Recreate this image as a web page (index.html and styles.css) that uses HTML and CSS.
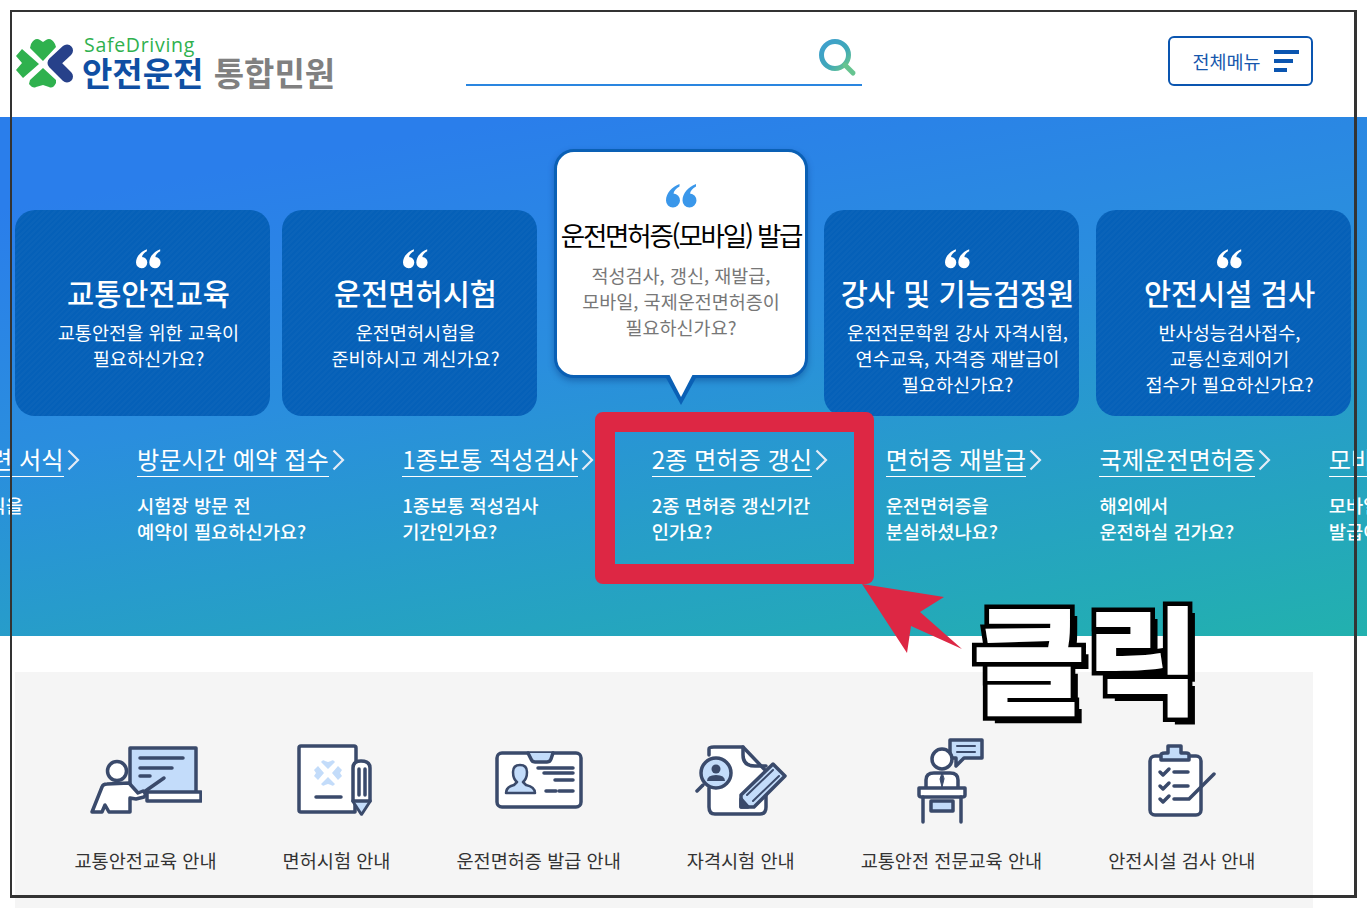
FILE: index.html
```html
<!DOCTYPE html>
<html lang="ko">

<head>
    <meta charset="UTF-8">
    <title>안전운전 통합민원</title>
    <link rel="stylesheet" href="styles.css">
</head>

<body>
    <svg class="defs" width="0" height="0">
        <defs>
            <linearGradient id="searchGrad" x1="0" y1="0" x2="1" y2="1">
                <stop offset="0" stop-color="#3f9fd0" />
                <stop offset="0.6" stop-color="#3fa8b8" />
                <stop offset="1" stop-color="#6cc88a" />
            </linearGradient>
            <symbol id="quote" viewBox="0 0 31 25">
                <path d="M13.5 1 C6 4 0 10 0 17.5 A7 7 0 1 0 7.5 10.5 C8 7.5 10 5.5 13.5 3.5 Z" />
                <path d="M30 1 C22.500 4 16.500 10 16.500 17.500 A7 7 0 1 0 24 10.500 C24.500 7.500 26.500 5.500 30 3.500 Z" />
            </symbol>
            <symbol id="chev" viewBox="0 0 13 22">
                <polyline points="1.500,1.500 11,11 1.500,20.500" fill="none" stroke="#e3ebf6" stroke-width="2.200" />
            </symbol>
        </defs>
    </svg>

    <header class="top">
        <a class="logo">
            <svg class="logo-mark" width="60" height="52" viewBox="0 0 60 52">
                <path d="M16 7 Q20 0 25 3 L28 5 L31 3 Q36 0 40 7 L41 10 L28 24 L15 11 Z" fill="#2fb14e" />
                <path d="M14 47 Q18 52 21 50 L28 48 L34 50 Q38 52 41 46 L41 43 L28 31 L15 43 Z" fill="#2fb14e" />
                <path d="M7 12 L24 27 L8 41 L1 33 L7 26 L1 19 Z" fill="#2fb14e" />
                <polyline points="52,13.500 38.500,26 52,39.500" fill="none" stroke="#27418a" stroke-width="12" stroke-linejoin="round" stroke-linecap="round" />
            </svg>
            <span class="logo-text">
                <span class="logo-en">SafeDriving</span>
                <span class="logo-ko"><b>안전운전</b> <i>통합민원</i></span>
            </span>
        </a>
        <div class="search">
            <svg width="40" height="40" viewBox="0 0 40 40">
                <circle cx="17" cy="17" r="13.500" fill="none" stroke="url(#searchGrad)" stroke-width="5" />
                <line x1="27" y1="27" x2="35" y2="35" stroke="#66c490" stroke-width="5" stroke-linecap="round" />
            </svg>
        </div>
        <button class="menu-btn">
            <span>전체메뉴</span>
            <span class="menu-bars"><i class="bar-a"></i><i class="bar-b"></i><i class="bar-c"></i></span>
        </button>
    </header>

    <section class="hero">
        <div class="cards">
            <div class="card">
                <svg class="quote"><use href="#quote" /></svg>
                <h2>교통안전교육</h2>
                <p>교통안전을 위한 교육이<br>필요하신가요?</p>
            </div>
            <div class="card">
                <svg class="quote"><use href="#quote" /></svg>
                <h2>운전면허시험</h2>
                <p>운전면허시험을<br>준비하시고 계신가요?</p>
            </div>
            <div class="card-active">
                <svg class="quote"><use href="#quote" /></svg>
                <h2>운전면허증(모바일) 발급</h2>
                <p>적성검사, 갱신, 재발급,<br>모바일, 국제운전면허증이<br>필요하신가요?</p>
            </div>
            <div class="card">
                <svg class="quote"><use href="#quote" /></svg>
                <h2>강사 및 기능검정원</h2>
                <p>운전전문학원 강사 자격시험,<br>연수교육, 자격증 재발급이<br>필요하신가요?</p>
            </div>
            <div class="card card-last">
                <svg class="quote"><use href="#quote" /></svg>
                <h2>안전시설 검사</h2>
                <p>반사성능검사접수,<br>교통신호제어기<br>접수가 필요하신가요?</p>
            </div>
        </div>

        <div class="links">
            <a class="link-item link-first">
                <div class="link-title"><span>운전면허 관련 서식</span><svg><use href="#chev" /></svg></div>
                <p>면허증 관련 서식을<br>찾으시나요?</p>
            </a>
            <a class="link-item">
                <div class="link-title"><span>방문시간 예약 접수</span><svg><use href="#chev" /></svg></div>
                <p>시험장 방문 전<br>예약이 필요하신가요?</p>
            </a>
            <a class="link-item">
                <div class="link-title"><span>1종보통 적성검사</span><svg><use href="#chev" /></svg></div>
                <p>1종보통 적성검사<br>기간인가요?</p>
            </a>
            <a class="link-item">
                <div class="link-title"><span>2종 면허증 갱신</span><svg><use href="#chev" /></svg></div>
                <p>2종 면허증 갱신기간<br>인가요?</p>
            </a>
            <a class="link-item">
                <div class="link-title"><span>면허증 재발급</span><svg><use href="#chev" /></svg></div>
                <p>운전면허증을<br>분실하셨나요?</p>
            </a>
            <a class="link-item">
                <div class="link-title"><span>국제운전면허증</span><svg><use href="#chev" /></svg></div>
                <p>해외에서<br>운전하실 건가요?</p>
            </a>
            <a class="link-item">
                <div class="link-title"><span>모바일 운전면허증</span><svg><use href="#chev" /></svg></div>
                <p>모바일 운전면허증<br>발급이 필요하신가요?</p>
            </a>
        </div>
    </section>

    <section class="guide">
        <a class="guide-item">
            <svg width="112" height="90" viewBox="0 0 112 90" class="ic">
                <rect x="40" y="13" width="66" height="45" fill="#c3dcfa" />
                <rect x="57" y="57" width="54" height="9" fill="#fff" />
                <line x1="50" y1="23" x2="93" y2="23" />
                <line x1="50" y1="33" x2="82" y2="33" />
                <line x1="50" y1="41" x2="60" y2="41" />
                <line x1="74" y1="43" x2="54" y2="57" />
                <circle cx="27" cy="36" r="9.500" fill="#fff" />
                <path d="M2 77 L12 52 Q13 49 17 49 L39 48 L48 58 L53 56 Q57 59 54 62 L46 64 L40 63 L40 77 L19 77 L15 70 L12 77 Z" fill="#fff" />
            </svg>
            <span>교통안전교육 안내</span>
        </a>
        <a class="guide-item">
            <svg width="82" height="90" viewBox="0 0 82 90" class="ic">
                <path d="M61 26 V13 Q61 11 59 11 H6 Q4 11 4 13 V75 Q4 77 6 77 H60 V40" fill="#fff" />
                <g class="clover">
                    <path d="M26 27 Q28 24 30 26 L33 27 L36 26 Q38 24 40 27 L33 34 Z" />
                    <path d="M26 49 Q28 52 30 50 L33 49 L36 50 Q38 52 40 49 L33 42 Z" />
                    <path d="M23 31 L29 38 L23 45 L19 41 L21 38 L19 35 Z" />
                    <path d="M43 31 L37 38 L43 45 L47 41 L45 38 L47 35 Z" />
                </g>
                <line x1="21" y1="62" x2="46" y2="62" />
                <path d="M58 66 V33 Q58 26 66 26 Q75 26 75 33 V66 L66.500 79 Z" fill="#fff" />
                <path d="M60 67 H73 L66.500 77 Z" fill="#c3dcfa" stroke="none" />
                <line x1="64" y1="34" x2="64" y2="60" />
                <line x1="70" y1="34" x2="70" y2="60" />
                <line x1="58" y1="66" x2="75" y2="66" />
            </svg>
            <span>면허시험 안내</span>
        </a>
        <a class="guide-item">
            <svg width="88" height="90" viewBox="0 0 88 90" class="ic">
                <rect x="2" y="18" width="84" height="54" rx="5" fill="#fff" />
                <path d="M33 18 L36 24 Q37 27 40 27 H52 Q55 27 56 24 L58 18" fill="#c3dcfa" />
                <path d="M11 58 Q11 52 19 50 L22 47 Q18 44 18 37 Q18 30 25 30 Q32 30 32 37 Q32 44 28 47 L31 50 Q40 52 40 58 Z" fill="#c3dcfa" stroke-width="2.500" />
                <line x1="43" y1="33" x2="78" y2="33" />
                <line x1="49" y1="38" x2="78" y2="38" />
                <line x1="60" y1="45" x2="78" y2="45" />
                <line x1="51" y1="56" x2="61" y2="56" />
                <line x1="64" y1="56" x2="78" y2="56" />
            </svg>
            <span>운전면허증 발급 안내</span>
        </a>
        <a class="guide-item">
            <svg width="92" height="90" viewBox="0 0 92 90" class="ic">
                <path d="M14 20 V14 Q14 12 19 12 H48 L71 36 V72 Q71 79 65 79 H20 Q14 79 14 72 V53" fill="#fff" />
                <path d="M48 12 V20 Q48 31 60 31 H71" fill="none" />
                <line x1="8" y1="50" x2="2" y2="56" />
                <circle cx="21" cy="38" r="15" fill="#c3dcfa" />
                <circle cx="21" cy="34" r="4.500" fill="#3a4a6b" stroke="none" />
                <path d="M12 46 Q12 40 21 40 Q30 40 30 46 Z" fill="#3a4a6b" stroke="none" />
                <path d="M46 60 L78 29 L90 41 L59 72 H46 Z" fill="#c3dcfa" />
                <line x1="52" y1="60" x2="78" y2="35" stroke-width="2" />
                <line x1="58" y1="66" x2="84" y2="41" stroke-width="2" />
                <path d="M46 64 L53 72 H46 Z" fill="#3a4a6b" />
            </svg>
            <span>자격시험 안내</span>
        </a>
        <a class="guide-item">
            <svg width="68" height="90" viewBox="0 0 68 90" class="ic">
                <path d="M33 5 H65 V23 H47 L39 31 V23 H33 Z" fill="#c3dcfa" />
                <line x1="40" y1="11" x2="58" y2="11" stroke-width="2" />
                <line x1="40" y1="17" x2="58" y2="17" stroke-width="2" />
                <circle cx="25" cy="24" r="10" fill="#fff" />
                <path d="M9 53 V45 Q9 38 17 38 H33 Q41 38 41 45 V53" fill="#fff" />
                <path d="M25 38 L23 44 L25 52 L27 44 Z" fill="#3a4a6b" stroke-width="1" />
                <path d="M2 53 H48 V60 Q48 62 45 62 H5 Q2 62 2 60 Z" fill="#fff" />
                <line x1="6" y1="62" x2="6" y2="87" />
                <line x1="44" y1="62" x2="44" y2="87" />
                <rect x="14" y="66" width="22" height="10" fill="#c3dcfa" />
            </svg>
            <span>교통안전 전문교육 안내</span>
        </a>
        <a class="guide-item">
            <svg width="68" height="90" viewBox="0 0 68 90" class="ic">
                <rect x="2" y="21" width="51" height="59" rx="5" fill="#fff" />
                <path d="M13 25 V20 Q13 18 17 18 H20 V11 H33 V18 H38 Q41 18 41 20 V25 Z" fill="#c3dcfa" />
                <polyline points="12,37 15,40 21,34" />
                <line x1="26" y1="37" x2="40" y2="37" />
                <polyline points="12,51 15,54 21,48" />
                <line x1="26" y1="51" x2="40" y2="51" />
                <polyline points="12,64 15,67 21,61" />
                <polyline points="26,64 41,64 66,39" fill="none" />
            </svg>
            <span>안전시설 검사 안내</span>
        </a>
    </section>

    <!-- annotation drawn over the capture -->
    <div class="mark-box"></div>
    <svg class="mark-arrow" width="110" height="80" viewBox="0 0 110 80">
        <polygon points="2,2 84,15 60,30 102,67 51,44 47,71" fill="#dd2744" />
    </svg>
    <div class="mark-text">클릭</div>
    <div class="frame"></div>
</body>

</html>
```

FILE: styles.css
```css
html,
body {
    margin: 0;
    padding: 0;
    height: 908px;
    overflow: hidden;
    background: #fff;
}

body {
    position: relative;
    font-family: "Noto Sans CJK KR", "Noto Sans", sans-serif;
    color: #333;
}

.defs {
    position: absolute;
}

a {
    text-decoration: none;
    color: inherit;
}

h2,
p {
    margin: 0;
    font-weight: 400;
}

/* header */
.top {
    height: 117px;
    display: flex;
    align-items: flex-start;
    padding-left: 15px;
    box-sizing: border-box;
}

.logo {
    display: flex;
    align-items: flex-start;
    padding-top: 37px;
    width: 451px;
    flex: none;
}

.logo-mark {
    flex: none;
    margin-right: 7px;
}

.logo-text {
    display: flex;
    flex-direction: column;
    margin-top: -2px;
}

.logo-en {
    font-family: "Open Sans", sans-serif;
    font-size: 19.500px;
    font-weight: 500;
    line-height: 20px;
    color: #2fb14e;
    letter-spacing: 0.7px;
    padding-left: 2px;
}

.logo-ko {
    font-size: 33px;
    line-height: 34px;
    white-space: nowrap;
}

.logo-ko b {
    color: #0f4fa3;
    font-weight: 700;
    margin-right: 1px;
}

.logo-ko i {
    color: #808080;
    font-style: normal;
    font-weight: 700;
}

.search {
    width: 396px;
    height: 49px;
    margin-top: 37px;
    border-bottom: 2px solid #2a86e0;
    display: flex;
    justify-content: flex-end;
    padding: 1px 4px 0 0;
    box-sizing: border-box;
    flex: none;
    margin-right: 306px;
}

.menu-btn {
    width: 145px;
    height: 50px;
    margin-top: 36px;
    background: #fff;
    border: 2px solid #0a55b0;
    border-radius: 6px;
    display: flex;
    align-items: center;
    justify-content: center;
    gap: 13px;
    font-family: inherit;
    font-size: 18.500px;
    color: #1757ad;
    flex: none;
    padding: 0 0 0 10px;
}

.menu-bars {
    display: flex;
    flex-direction: column;
    gap: 5px;
    width: 25px;
}

.menu-bars i {
    display: block;
    height: 4px;
    background: #0a55b0;
}

.bar-a {
    width: 25px;
}

.bar-b {
    width: 19px;
}

.bar-c {
    width: 13px;
}

/* hero */
.hero {
    height: 519px;
    background: linear-gradient(170deg, #2a7eeb 12%, #2a8ede 45%, #22b1ae 100%);
    color: #fff;
    overflow: hidden;
}

.cards {
    display: flex;
    align-items: flex-start;
    padding: 32px 0 0 15px;
}

.card {
    width: 255px;
    height: 206px;
    margin-top: 61px;
    margin-right: 12px;
    border-radius: 20px;
    box-sizing: border-box;
    padding: 38px 0 0 12px;
    text-align: center;
    background-color: #0560b8;
    background-image: repeating-linear-gradient(135deg, rgba(255, 255, 255, 0.02) 0, rgba(255, 255, 255, 0.02) 2px, transparent 2px, transparent 4px);
    flex: none;
}

.card-last {
    margin-right: 0;
}

.card:nth-child(2) {
    margin-right: 17px;
}

.card:nth-child(4) {
    margin-right: 17px;
}

.quote {
    display: block;
    width: 25px;
    height: 21px;
    margin: 0 auto;
    fill: #fff;
}

.card h2 {
    font-size: 29.500px;
    font-weight: 500;
    line-height: 42px;
    margin-top: 2px;
    white-space: nowrap;
}

.card p {
    font-size: 18.600px;
    line-height: 26px;
    margin-top: 6px;
    white-space: nowrap;
}

.card-active {
    position: relative;
    width: 254px;
    height: 229px;
    margin-right: 16px;
    box-sizing: border-box;
    background: #fff;
    border: 3px solid #0a60b5;
    border-radius: 20px;
    padding-top: 31px;
    text-align: center;
    box-shadow: 0 3px 6px rgba(0, 40, 110, 0.35);
    flex: none;
}

.card-active:before {
    content: "";
    position: absolute;
    left: 108px;
    bottom: -30px;
    border-top: 29px solid #0a60b5;
    border-left: 16px solid transparent;
    border-right: 16px solid transparent;
}

.card-active:after {
    content: "";
    position: absolute;
    left: 111px;
    bottom: -22px;
    border-top: 25px solid #fff;
    border-left: 13px solid transparent;
    border-right: 13px solid transparent;
}

.card-active .quote {
    width: 31px;
    height: 25px;
    fill: #3a97ea;
}

.card-active h2 {
    font-size: 26.500px;
    line-height: 40px;
    letter-spacing: -2.200px;
    color: #000;
    white-space: nowrap;
    margin-top: 7px;
}

.card-active p {
    font-size: 18.500px;
    line-height: 26px;
    color: #777;
    margin-top: 7px;
    white-space: nowrap;
}

.links {
    display: flex;
    gap: 55.500px;
    margin-top: 24px;
    margin-left: -128px;
    white-space: nowrap;
}

.link-item {
    flex: none;
}

.link-title {
    display: flex;
    align-items: flex-start;
    font-size: 24.200px;
    line-height: 35px;
}

.link-title span {
    display: block;
    padding-top: 1px;
    border-bottom: 1px solid #fff;
}

.link-title svg {
    width: 13px;
    height: 22px;
    margin: 9px 2px 0 3px;
}

.link-item p {
    font-size: 18.700px;
    line-height: 26px;
    font-weight: 500;
    margin-top: 15px;
}

.link-first p {
    padding-left: 3px;
}

/* guide icons */
.guide {
    margin: 36px 0 0 15px;
    width: 1298px;
    height: 236px;
    background: #f5f5f5;
    display: flex;
    gap: 66px;
    padding: 63px 0 0 59.500px;
    box-sizing: border-box;
}

.guide-item {
    display: flex;
    flex-direction: column;
    align-items: center;
    font-size: 18.600px;
    line-height: 26px;
    color: #333;
    white-space: nowrap;
    flex: none;
}

.guide-item span {
    margin-top: 22px;
}

.ic {
    fill: none;
    stroke: #3a4a6b;
    stroke-width: 3.500;
    stroke-linecap: round;
    stroke-linejoin: round;
}

.ic .clover path {
    fill: #c3dcfa;
    stroke: none;
}

/* annotation */
.mark-box {
    position: absolute;
    left: 595px;
    top: 412px;
    width: 279px;
    height: 172px;
    box-sizing: border-box;
    border: 20px solid #dd2744;
    border-radius: 8px;
}

.mark-arrow {
    position: absolute;
    left: 860px;
    top: 582px;
}

.mark-text {
    position: absolute;
    left: 972px;
    top: 570px;
    font-size: 118px;
    line-height: 170px;
    font-weight: 900;
    color: #fff;
    -webkit-text-stroke: 9px #000;
    paint-order: stroke fill;
    text-shadow: 7px 7px 0 #000;
    white-space: nowrap;
    transform: scaleX(1.05);
    transform-origin: left center;
}

.frame {
    position: absolute;
    left: 10px;
    top: 10px;
    width: 1347px;
    height: 888px;
    box-sizing: border-box;
    border-style: solid;
    border-color: #333;
    border-width: 2px 3px 3px 2px;
    pointer-events: none;
}
```
